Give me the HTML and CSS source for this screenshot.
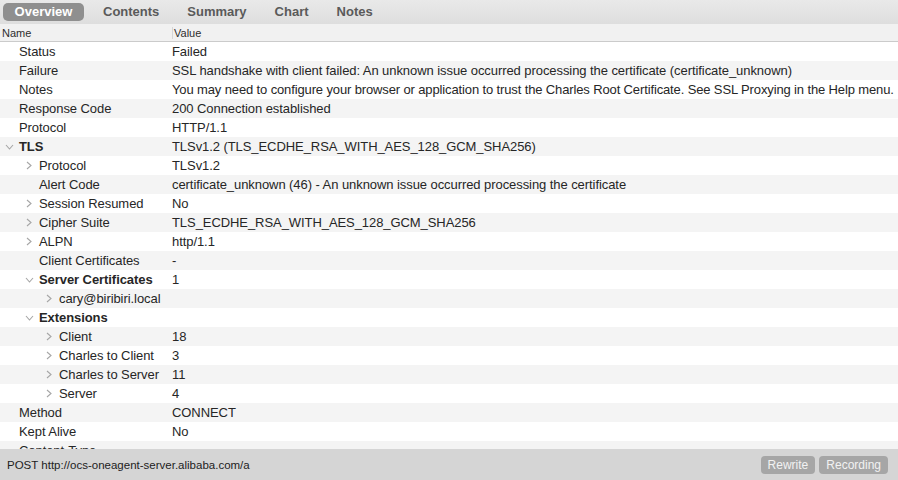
FILE: index.html
```html
<!DOCTYPE html>
<html>
<head>
<meta charset="utf-8">
<link rel="stylesheet" href="styles.css">
</head>
<body>
<div class="app">
  <div class="tabs">
    <div class="tab active">Overview</div>
    <div class="tab">Contents</div>
    <div class="tab">Summary</div>
    <div class="tab">Chart</div>
    <div class="tab">Notes</div>
  </div>
  <div class="header">
    <div class="hname">Name</div>
    <div class="hvalue">Value</div>
  </div>
  <div class="rows">
    <div class="row"><div class="name l0"><span class="arr"></span>Status</div><div class="val">Failed</div></div>
    <div class="row"><div class="name l0"><span class="arr"></span>Failure</div><div class="val">SSL handshake with client failed: An unknown issue occurred processing the certificate (certificate_unknown)</div></div>
    <div class="row"><div class="name l0"><span class="arr"></span>Notes</div><div class="val tight">You may need to configure your browser or application to trust the Charles Root Certificate. See SSL Proxying in the Help menu.</div></div>
    <div class="row"><div class="name l0"><span class="arr"></span>Response Code</div><div class="val">200 Connection established</div></div>
    <div class="row"><div class="name l0"><span class="arr"></span>Protocol</div><div class="val">HTTP/1.1</div></div>
    <div class="row"><div class="name l0 bold"><span class="arr"><svg width="9" height="6" viewBox="0 0 9 6"><polyline points="1,1 4.5,5 8,1" fill="none" stroke="#a6a6a6" stroke-width="1.1"/></svg></span>TLS</div><div class="val">TLSv1.2 (TLS_ECDHE_RSA_WITH_AES_128_GCM_SHA256)</div></div>
    <div class="row"><div class="name l1"><span class="arr"><svg width="6" height="9" viewBox="0 0 6 9"><polyline points="1,1 5,4.5 1,8" fill="none" stroke="#a6a6a6" stroke-width="1.1"/></svg></span>Protocol</div><div class="val">TLSv1.2</div></div>
    <div class="row"><div class="name l1"><span class="arr"></span>Alert Code</div><div class="val">certificate_unknown (46) - An unknown issue occurred processing the certificate</div></div>
    <div class="row"><div class="name l1"><span class="arr"><svg width="6" height="9" viewBox="0 0 6 9"><polyline points="1,1 5,4.5 1,8" fill="none" stroke="#a6a6a6" stroke-width="1.1"/></svg></span>Session Resumed</div><div class="val">No</div></div>
    <div class="row"><div class="name l1"><span class="arr"><svg width="6" height="9" viewBox="0 0 6 9"><polyline points="1,1 5,4.5 1,8" fill="none" stroke="#a6a6a6" stroke-width="1.1"/></svg></span>Cipher Suite</div><div class="val">TLS_ECDHE_RSA_WITH_AES_128_GCM_SHA256</div></div>
    <div class="row"><div class="name l1"><span class="arr"><svg width="6" height="9" viewBox="0 0 6 9"><polyline points="1,1 5,4.5 1,8" fill="none" stroke="#a6a6a6" stroke-width="1.1"/></svg></span>ALPN</div><div class="val">http/1.1</div></div>
    <div class="row"><div class="name l1"><span class="arr"></span>Client Certificates</div><div class="val">-</div></div>
    <div class="row"><div class="name l1 bold"><span class="arr"><svg width="9" height="6" viewBox="0 0 9 6"><polyline points="1,1 4.5,5 8,1" fill="none" stroke="#a6a6a6" stroke-width="1.1"/></svg></span>Server Certificates</div><div class="val">1</div></div>
    <div class="row"><div class="name l2"><span class="arr"><svg width="6" height="9" viewBox="0 0 6 9"><polyline points="1,1 5,4.5 1,8" fill="none" stroke="#a6a6a6" stroke-width="1.1"/></svg></span>cary@biribiri.local</div><div class="val"></div></div>
    <div class="row"><div class="name l1 bold"><span class="arr"><svg width="9" height="6" viewBox="0 0 9 6"><polyline points="1,1 4.5,5 8,1" fill="none" stroke="#a6a6a6" stroke-width="1.1"/></svg></span>Extensions</div><div class="val"></div></div>
    <div class="row"><div class="name l2"><span class="arr"><svg width="6" height="9" viewBox="0 0 6 9"><polyline points="1,1 5,4.5 1,8" fill="none" stroke="#a6a6a6" stroke-width="1.1"/></svg></span>Client</div><div class="val">18</div></div>
    <div class="row"><div class="name l2"><span class="arr"><svg width="6" height="9" viewBox="0 0 6 9"><polyline points="1,1 5,4.5 1,8" fill="none" stroke="#a6a6a6" stroke-width="1.1"/></svg></span>Charles to Client</div><div class="val">3</div></div>
    <div class="row"><div class="name l2"><span class="arr"><svg width="6" height="9" viewBox="0 0 6 9"><polyline points="1,1 5,4.5 1,8" fill="none" stroke="#a6a6a6" stroke-width="1.1"/></svg></span>Charles to Server</div><div class="val">11</div></div>
    <div class="row"><div class="name l2"><span class="arr"><svg width="6" height="9" viewBox="0 0 6 9"><polyline points="1,1 5,4.5 1,8" fill="none" stroke="#a6a6a6" stroke-width="1.1"/></svg></span>Server</div><div class="val">4</div></div>
    <div class="row"><div class="name l0"><span class="arr"></span>Method</div><div class="val">CONNECT</div></div>
    <div class="row"><div class="name l0"><span class="arr"></span>Kept Alive</div><div class="val">No</div></div>
    <div class="row"><div class="name l0"><span class="arr"></span>Content-Type</div><div class="val"></div></div>
  </div>
  <div class="status">
    <div class="url">POST http://ocs-oneagent-server.alibaba.com/a</div>
    <div class="btns">
      <div class="btn">Rewrite</div>
      <div class="btn">Recording</div>
    </div>
  </div>
</div>
</body>
</html>
```
FILE: styles.css
```css
* { box-sizing: border-box; }
html, body { margin: 0; padding: 0; }
body {
  width: 898px;
  height: 480px;
  overflow: hidden;
  font-family: "Liberation Sans", Arial, sans-serif;
  color: #262626;
  background: #fff;
}
.app {
  display: flex;
  flex-direction: column;
  height: 480px;
}
.tabs {
  height: 24px;
  flex: none;
  display: flex;
  align-items: center;
  padding-left: 3px;
  background: linear-gradient(#e9e9e9, #dedede);
}
.tab {
  height: 18px;
  line-height: 18px;
  font-size: 13px;
  font-weight: bold;
  color: #5a5a5a;
  padding: 0 11px;
  margin-right: 6px;
  border-radius: 5px;
  text-align: center;
}
.tab.active {
  background: #8f8f8f;
  color: #fff;
  width: 81px;
  padding: 0;
  margin-right: 8px;
}
.header {
  height: 18px;
  flex: none;
  display: flex;
  align-items: center;
  font-size: 11px;
  color: #2e2e2e;
  background: #f1f1f1;
  border-bottom: 1px solid #cbcbcb;
}
.hname { width: 172px; padding-left: 2px; }
.hvalue {
  border-left: 1px solid #d6d6d6;
  padding-left: 1px;
  height: 12px;
  line-height: 12px;
}
.rows {
  flex: 1;
  overflow: hidden;
}
.row {
  height: 19px;
  display: flex;
  align-items: center;
  font-size: 13px;
  letter-spacing: -0.07px;
}
.row:nth-child(even) { background: #f4f4f4; }
.name {
  width: 172px;
  flex: none;
  display: flex;
  align-items: center;
  white-space: nowrap;
}
.name.bold { font-weight: bold; }
.arr {
  width: 19px;
  flex: none;
  display: flex;
  align-items: center;
  justify-content: center;
  padding-right: 1px;
}
.l1 { padding-left: 20px; }
.l2 { padding-left: 40px; }
.val { white-space: nowrap; }
.val.tight { letter-spacing: -0.13px; }
.status {
  height: 31px;
  flex: none;
  background: #d5d5d5;
  display: flex;
  align-items: center;
  justify-content: space-between;
  padding: 0 10px 0 7px;
}
.url { font-size: 11.5px; color: #222; }
.btns { display: flex; gap: 4px; padding-top: 1px; }
.btn {
  height: 18px;
  line-height: 18px;
  font-size: 12px;
  color: #f2f2f2;
  background: #a6a6a6;
  border-radius: 4px;
  padding: 0 7px;
}
```
